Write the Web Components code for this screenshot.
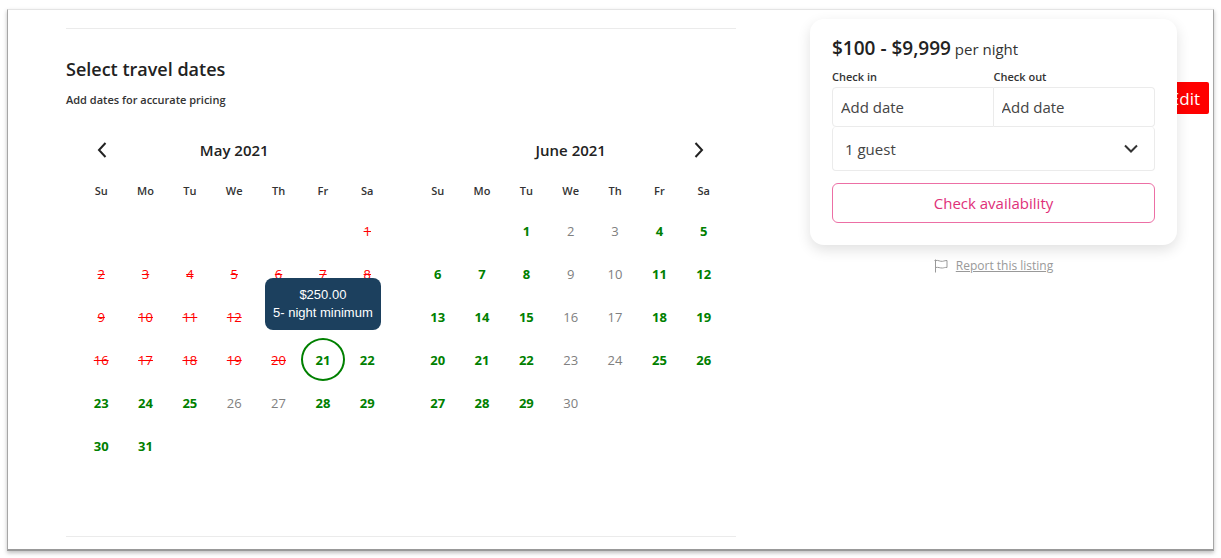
<!DOCTYPE html>
<html lang="en">
<head>
<meta charset="utf-8">
<meta name="viewport" content="width=device-width, initial-scale=1">
<title>Select travel dates</title>
<style>
body {
  margin: 0;
  background: #fff;
  color: #333;
  font-family: "Open Sans", "Noto Sans", sans-serif;
}
</style>
</head>
<body>
<listing-page>
  <travel-dates>
    <span slot="title">Select travel dates</span>
    <span slot="hint">Add dates for accurate pricing</span>
    <month-grid year="2021" month="5" nav="prev" booked="1-20" closed="26,27" selected="21" covered="13-15">
      <day-tooltip slot="tooltip">$250.00<br>5- night minimum</day-tooltip>
    </month-grid>
    <month-grid year="2021" month="6" nav="next" closed="2,3,9,10,16,17,23,24,30"></month-grid>
  </travel-dates>
  <booking-card slot="aside">
    <span slot="price">$100 - $9,999</span>
  </booking-card>
  <report-link slot="aside">Report this listing</report-link>
  <edit-button slot="aside">Edit</edit-button>
</listing-page>

<template id="listing-page">
<style>
:host {
  display: block;
  padding: 9px 7px 8px 7px;
}
.frame {
  display: grid;
  grid-template-columns: minmax(0, 1fr) 367px;
  column-gap: 74px;
  padding: 18px 36px 12px 58px;
  border: 1px solid #a6a6a6;
  border-top-color: #e4e4e4;
  border-bottom: 2px solid #999;
  box-shadow: 0 2px 4px rgba(0, 0, 0, 0.25);
}
aside {
  position: relative;
  margin-top: -9px;
}
</style>
<div class="frame">
  <main><slot></slot></main>
  <aside><slot name="aside"></slot></aside>
</div>
</template>

<template id="travel-dates">
<style>
:host {
  display: block;
  padding: 25px 0 69px;
  border-top: 1px solid #ebebeb;
  border-bottom: 1px solid #ebebeb;
}
h2 {
  margin: 0;
  color: #222;
  font-size: 18px;
  font-weight: 600;
  line-height: 30px;
}
p {
  margin: 6px 0 25px;
  font-size: 11px;
  font-weight: 600;
  line-height: 20px;
}
.months {
  display: grid;
  grid-template-columns: 1fr 1fr;
  column-gap: 26px;
  padding: 0 10px 0 13px;
}
</style>
<section>
  <h2><slot name="title"></slot></h2>
  <p><slot name="hint"></slot></p>
  <div class="months"><slot></slot></div>
</section>
</template>

<template id="month-grid">
<style>
:host {
  display: block;
}
header {
  display: grid;
  grid-template-columns: 46px 1fr 54px;
  align-items: center;
  height: 30px;
  margin-bottom: 10px;
}
h3 {
  grid-area: 1 / 1 / 2 / 4;
  margin: 0;
  color: #222;
  font-size: 15px;
  font-weight: 600;
  line-height: 20px;
  text-align: center;
}
button {
  padding: 0;
  border: 0;
  background: none;
  font: inherit;
  color: inherit;
  cursor: pointer;
}
.nav {
  display: grid;
  place-items: center;
  height: 30px;
  grid-row: 1;
}
.nav svg {
  width: 20px;
  height: 20px;
  fill: none;
  stroke: #222;
  stroke-width: 2;
}
.prev { grid-column: 1; }
.next { grid-column: 3; }
table {
  width: 100%;
  border-collapse: collapse;
  table-layout: fixed;
}
th {
  height: 34px;
  padding: 0 0 4px;
  box-sizing: border-box;
  font-size: 11px;
  font-weight: 600;
}
td {
  position: relative;
  height: 43px;
  padding: 0;
  font-size: 13px;
  text-align: center;
}
td button {
  width: 44px;
  height: 43px;
  border-radius: 50%;
  vertical-align: top;
  color: #008000;
  font-weight: 700;
}
td .booked {
  color: #f00;
  font-weight: 400;
  text-decoration: line-through;
}
td .closed {
  color: #808080;
  font-weight: 400;
}
td .selected {
  border: 2px solid #008000;
}
td .covered {
  visibility: hidden;
}
</style>
<header><h3></h3></header>
<table>
  <thead><tr></tr></thead>
  <tbody></tbody>
</table>
</template>

<template id="day-tooltip">
<style>
/* floats above the selected day */
:host {
  position: absolute;
  z-index: 1;
  bottom: calc(100% + 8px);
  left: 50%;
  transform: translateX(-50%);
  box-sizing: border-box;
  width: 116px;
  padding: 8px 0;
  border-radius: 8px;
  background: #1c405e;
  color: #fff;
  font: 13px/18px "Liberation Sans", Arial, sans-serif;
  text-align: center;
  white-space: nowrap;
}
</style>
<slot></slot>
</template>

<template id="booking-card">
<style>
:host {
  display: block;
  position: relative;
  z-index: 1;
  padding: 14px 22px 22px;
  border-radius: 14px;
  background: #fff;
  box-shadow: 0 5px 14px rgba(0, 0, 0, 0.12);
}
.price {
  margin: 0 0 3px;
  font-size: 15px;
  line-height: 30px;
}
.price strong {
  color: #222;
  font-size: 19px;
  font-weight: 600;
}
.dates {
  display: grid;
  grid-template-columns: 1fr 1fr;
}
label {
  font-size: 11px;
  font-weight: 600;
  line-height: 20px;
}
input,
select,
button {
  box-sizing: border-box;
  width: 100%;
  margin: 0;
  border: 1px solid #ebebeb;
  background: #fff;
  color: #444;
  font: 15px "Open Sans", "Noto Sans", sans-serif;
}
input {
  height: 40px;
  padding: 0 8px;
  border-radius: 4px 0 0 4px;
}
input::placeholder {
  color: #444;
  opacity: 1;
}
#checkout {
  border-left: 0;
  border-radius: 0 4px 4px 0;
}
.guests {
  display: grid;
  align-items: center;
  margin-bottom: 12px;
}
.guests > * {
  grid-area: 1 / 1;
}
select {
  height: 44px;
  padding: 0 12px;
  border-top: 0;
  border-radius: 4px;
  appearance: none;
}
.guests svg {
  justify-self: end;
  width: 16px;
  height: 16px;
  margin-right: 16px;
  fill: none;
  stroke: #333;
  stroke-width: 2;
  pointer-events: none;
}
button {
  display: block;
  height: 40px;
  border-color: #ec6fa5;
  border-radius: 6px;
  color: #e03079;
  cursor: pointer;
}
</style>
<form>
  <p class="price"><strong><slot name="price"></slot></strong> per night</p>
  <div class="dates">
    <label for="checkin">Check in</label>
    <label for="checkout">Check out</label>
    <input id="checkin" type="text" placeholder="Add date">
    <input id="checkout" type="text" placeholder="Add date">
  </div>
  <div class="guests">
    <select aria-label="Guests">
      <option>1 guest</option>
      <option>2 guests</option>
      <option>3 guests</option>
      <option>4 guests</option>
    </select>
    <svg viewBox="0 0 16 16"><path d="M2 4.5l6 6 6-6"/></svg>
  </div>
  <button type="submit">Check availability</button>
</form>
</template>

<template id="report-link">
<style>
:host {
  display: flex;
  justify-content: center;
  align-items: center;
  gap: 8px;
  margin-top: 11px;
  font-size: 12px;
  line-height: 20px;
}
svg {
  width: 14px;
  height: 14px;
  fill: none;
  stroke: #999;
}
a {
  color: #999;
}
</style>
<svg viewBox="0 0 14 14"><path d="M1.5 0.5v13M0.500 1.500h1c3-.6 4.500 1.200 7 .8c2-.4 3-.8 4.500-.8v7c-2-.3-3 .4-4.500.5c-2.500.2-4-1.100-7-.5"/></svg>
<a href="#report"><slot></slot></a>
</template>

<template id="edit-button">
<style>
/* pinned to the page edge, partly tucked under the booking card */
:host {
  position: absolute;
  top: 63px;
  right: -32px;
}
button {
  display: block;
  height: 32px;
  padding: 0 9px;
  border: 0;
  border-radius: 2px;
  background: #f00;
  color: #fff;
  font: 17px "Open Sans", "Noto Sans", sans-serif;
  cursor: pointer;
}
</style>
<button type="button"><slot></slot></button>
</template>

<script>
class BaseElement extends HTMLElement {
  constructor() {
    super();
    this.attachShadow({ mode: "open" });
    const template = document.getElementById(this.localName);
    this.shadowRoot.appendChild(template.content.cloneNode(true));
  }
}

const WEEKDAYS = ["Su", "Mo", "Tu", "We", "Th", "Fr", "Sa"];
const MONTHS = [
  "January", "February", "March", "April", "May", "June", "July",
  "August", "September", "October", "November", "December",
];
const CHEVRONS = {
  prev: "M13.5 3L7 10l6.5 7",
  next: "M6.5 3L13 10l-6.5 7",
};

// "1-3,8" -> Set {1, 2, 3, 8}
function parseDays(text) {
  const days = new Set();
  for (const part of (text || "").split(",")) {
    const [from, to = from] = part.split("-").map(Number);
    for (let day = from; day <= to; day++) days.add(day);
  }
  return days;
}

class MonthGrid extends BaseElement {
  connectedCallback() {
    const year = Number(this.getAttribute("year"));
    const month = Number(this.getAttribute("month"));
    this.shadowRoot.querySelector("h3").textContent = `${MONTHS[month - 1]} ${year}`;
    this.renderNav(this.getAttribute("nav"));
    this.renderWeekdays();
    this.renderDays(year, month);
  }

  renderNav(nav) {
    const button = document.createElement("button");
    button.type = "button";
    button.className = `nav ${nav}`;
    button.setAttribute("aria-label", nav === "prev" ? "Previous month" : "Next month");
    button.innerHTML = `<svg viewBox="0 0 20 20"><path d="${CHEVRONS[nav]}"/></svg>`;
    this.shadowRoot.querySelector("header").appendChild(button);
  }

  renderWeekdays() {
    const row = this.shadowRoot.querySelector("thead tr");
    for (const name of WEEKDAYS) {
      const th = document.createElement("th");
      th.scope = "col";
      th.textContent = name;
      row.appendChild(th);
    }
  }

  renderDays(year, month) {
    const booked = parseDays(this.getAttribute("booked"));
    const closed = parseDays(this.getAttribute("closed"));
    // days that lie behind the open tooltip
    const covered = parseDays(this.getAttribute("covered"));
    const selected = Number(this.getAttribute("selected"));
    const offset = new Date(year, month - 1, 1).getDay();
    const count = new Date(year, month, 0).getDate();
    const tbody = this.shadowRoot.querySelector("tbody");

    for (let start = 1 - offset; start <= count; start += 7) {
      const row = tbody.insertRow();
      for (let day = start; day < start + 7; day++) {
        const cell = row.insertCell();
        if (day < 1 || day > count) continue;

        const button = document.createElement("button");
        button.type = "button";
        button.textContent = day;
        button.classList.toggle("booked", booked.has(day));
        button.classList.toggle("closed", closed.has(day));
        button.classList.toggle("covered", covered.has(day));
        button.classList.toggle("selected", day === selected);
        button.disabled = booked.has(day);
        cell.appendChild(button);

        if (day === selected) {
          const slot = document.createElement("slot");
          slot.name = "tooltip";
          cell.appendChild(slot);
        }
      }
    }
  }
}

customElements.define("listing-page", class extends BaseElement {});
customElements.define("travel-dates", class extends BaseElement {});
customElements.define("month-grid", MonthGrid);
customElements.define("day-tooltip", class extends BaseElement {});
customElements.define("booking-card", class extends BaseElement {});
customElements.define("report-link", class extends BaseElement {});
customElements.define("edit-button", class extends BaseElement {});
</script>
</body>
</html>
